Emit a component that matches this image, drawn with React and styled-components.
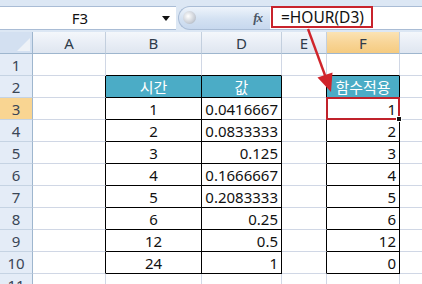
import React from 'react';
import styled, { createGlobalStyle } from 'styled-components';

const Global = createGlobalStyle`
  html, body { margin: 0; padding: 0; background: #fff; overflow: hidden; }
  body { font-family: "Noto Sans", "Noto Sans CJK KR", sans-serif; }
`;

const Page = styled.div`
  position: relative;
  width: 422px;
  height: 284px;
  overflow: hidden;
  background: #fff;
`;

const Ribbon = styled.div`
  display: flex;
  height: 24px;
  padding: 6px 0 2px;
  background: #dce7f4;
`;

const NameBox = styled.div`
  display: flex;
  align-items: center;
  width: 176px;
  box-sizing: border-box;
  background: #fff;
  border-top: 1px solid #a9bcd5;
  border-bottom: 1px solid #a9bcd5;
  font-size: 15px;
  color: #111;
`;

const NameText = styled.span`
  width: 160px;
  text-align: center;
`;

const DropArrow = styled.span`
  width: 0;
  height: 0;
  border-left: 4px solid transparent;
  border-right: 4px solid transparent;
  border-top: 5px solid #111;
  margin-left: 2px;
`;

const FxArea = styled.div`
  display: flex;
  align-items: center;
  justify-content: flex-end;
  width: 92px;
  box-sizing: border-box;
  margin-left: 2px;
  border: 1px solid #a9bcd5;
  border-right: none;
  border-radius: 12px 0 0 12px;
  background: linear-gradient(#eef4fb, #d3e1f2 55%, #c7d8ee);
  position: relative;
  padding-right: 8px;
`;

const Knob = styled.span`
  position: absolute;
  left: 4px;
  top: 4px;
  width: 13px;
  height: 13px;
  border-radius: 50%;
  background: radial-gradient(circle at 40% 40%, #ffffff, #c9ced6 60%, #9aa3b0);
`;

const Fx = styled.span`
  font-family: "Liberation Serif", serif;
  font-style: italic;
  font-weight: bold;
  font-size: 13px;
  color: #4a5564;
  letter-spacing: -1px;
`;

const FormulaBox = styled.div`
  flex: 1;
  display: flex;
  align-items: flex-start;
  box-sizing: border-box;
  background: #fff;
  border-top: 1px solid #a9bcd5;
  border-bottom: 1px solid #a9bcd5;
  padding-left: 1px;
`;

const FormulaText = styled.span`
  display: flex;
  align-items: center;
  box-sizing: border-box;
  width: 102px;
  height: 22px;
  margin-top: -1px;
  padding-left: 8px;
  border: 2px solid #c8232c;
  font-size: 15.5px;
  color: #111;
  white-space: nowrap;
`;

const Sheet = styled.div`
  display: grid;
  grid-template-columns: 33px 73px 96px 80px 45px 73px 73px;
  grid-auto-rows: 22px;
`;

const Corner = styled.div`
  position: relative;
  background: #d3e0f1;
  border-right: 1px solid #9eb6ce;
  border-bottom: 1px solid #9eb6ce;
  &::after {
    content: '';
    position: absolute;
    right: 2px;
    bottom: 2px;
    border-left: 13px solid transparent;
    border-bottom: 13px solid #eef2f7;
  }
`;

const ColHead = styled.div`
  display: flex;
  align-items: center;
  justify-content: center;
  font-size: 15px;
  color: #2f3b4a;
  background: ${p => p.$sel
    ? 'linear-gradient(#fbe3b4, #f8d597 50%, #f5cb80)'
    : 'linear-gradient(#f4f7fb, #e9eef6 50%, #dfe6f0)'};
  border-right: 1px solid #c3cfde;
  border-bottom: 1px solid #9eb6ce;
`;

const RowHead = styled.div`
  display: flex;
  align-items: center;
  justify-content: center;
  font-size: 15px;
  color: #3a4656;
  background: ${p => (p.$sel ? '#f9d592' : '#e4ecf7')};
  border-right: 1px solid #9eb6ce;
  border-bottom: 1px solid #c5d3e3;
`;

const Cell = styled.div`
  position: relative;
  display: flex;
  align-items: center;
  justify-content: ${p => p.$align};
  padding: 0 ${p => (p.$align === 'flex-end' ? '3px' : '0')} 0 0;
  font-size: 15px;
  color: ${p => (p.$head ? '#ffffff' : '#111')};
  background: ${p => (p.$head ? '#4bacc6' : '#fff')};
  border-right: 1px solid ${p => p.$br};
  border-bottom: 1px solid ${p => p.$bb};
  white-space: nowrap;
  ${p => p.$sel && `
    &::after {
      content: '';
      position: absolute;
      left: -1px; top: -1px; right: -1px; bottom: -1px;
      border: 2px solid #c0222b;
    }
    &::before {
      content: '';
      position: absolute;
      right: -3px; bottom: -3px;
      width: 4px; height: 4px;
      background: #111;
      border: 1px solid #fff;
      z-index: 2;
    }
  `}
`;

const Arrow = styled.svg`
  position: absolute;
  left: 0;
  top: 0;
  pointer-events: none;
`;

const cols = ['A', 'B', 'D', 'E', 'F', 'G'];
const tableCols = ['B', 'D', 'F'];
const align = { B: 'center', D: 'flex-end', F: 'flex-end' };

const data = {
  2: { B: '시간', D: '값', F: '함수적용' },
  3: { B: '1', D: '0.0416667', F: '1' },
  4: { B: '2', D: '0.0833333', F: '2' },
  5: { B: '3', D: '0.125', F: '3' },
  6: { B: '4', D: '0.1666667', F: '4' },
  7: { B: '5', D: '0.2083333', F: '5' },
  8: { B: '6', D: '0.25', F: '6' },
  9: { B: '12', D: '0.5', F: '12' },
  10: { B: '24', D: '1', F: '0' },
};

const inTable = (r, c) => r >= 2 && r <= 10 && tableCols.includes(c);

export default function App() {
  const rows = Array.from({ length: 11 }, (_, i) => i + 1);
  return (
    <Page>
      <Global />
      <Ribbon>
        <NameBox>
          <NameText>F3</NameText>
          <DropArrow />
        </NameBox>
        <FxArea>
          <Knob />
          <Fx>fx</Fx>
        </FxArea>
        <FormulaBox>
          <FormulaText>=HOUR(D3)</FormulaText>
        </FormulaBox>
      </Ribbon>
      <Sheet>
        <Corner />
        {cols.map(c => (
          <ColHead key={c} $sel={c === 'F'}>{c === 'G' ? '' : c}</ColHead>
        ))}
        {rows.map(r => (
          <React.Fragment key={r}>
            <RowHead $sel={r === 3}>{r}</RowHead>
            {cols.map((c, ci) => {
              const next = cols[ci + 1];
              const head = r === 2 && inTable(r, c);
              const br = inTable(r, c) || (next && inTable(r, next)) ? '#000' : '#d0d7e5';
              const bb = inTable(r, c) || inTable(r + 1, c) ? '#000' : '#d0d7e5';
              return (
                <Cell
                  key={c}
                  $align={head ? 'center' : align[c] || 'center'}
                  $head={head}
                  $br={br}
                  $bb={bb}
                  $sel={r === 3 && c === 'F'}
                >
                  {data[r] && data[r][c]}
                </Cell>
              );
            })}
          </React.Fragment>
        ))}
      </Sheet>
      <Arrow width="422" height="284" viewBox="0 0 422 284">
        <line x1="308" y1="29" x2="326" y2="78" stroke="#d0242b" strokeWidth="2.4" />
        <polygon points="331,92 317.5,77.5 332.5,72.5" fill="#d0242b" />
      </Arrow>
    </Page>
  );
}
